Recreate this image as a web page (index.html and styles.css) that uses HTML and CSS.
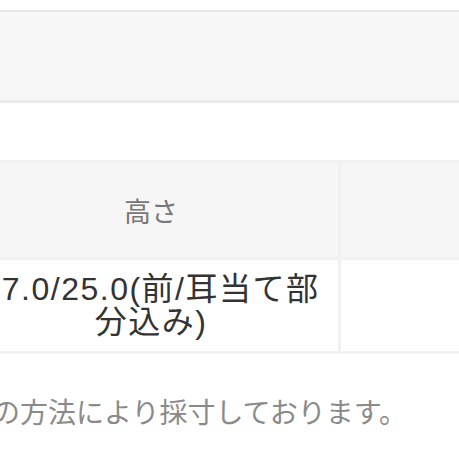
FILE: index.html
```html
<!DOCTYPE html>
<html lang="ja">
<head>
  <meta charset="UTF-8" />
  <meta name="viewport" content="width=device-width, initial-scale=1.0"/>
  <title>サイズ表</title>
  <link rel="stylesheet" href="styles.css">
</head>
<body>

  <div class="size-band"></div>

  <table class="size-table">
    <tr>
      <th class="col-main">高さ</th>
      <th class="col-side"></th>
    </tr>
    <tr>
      <td class="col-main">27.0/25.0(前/耳当て部<br>分込み)</td>
      <td class="col-side"></td>
    </tr>
  </table>

  <p class="size-note">上記の方法により採寸しております。</p>

</body>
</html>
```

FILE: styles.css
```css
* {
  box-sizing: border-box;
}

html,
body {
  overflow: hidden;
}

body {
  margin: 0;
  padding: 0;
  background-color: #fff;
  font-family: "Liberation Sans", "Noto Sans CJK JP", sans-serif;
  color: #333;
}

.size-band {
  margin-top: 10px;
  height: 93px;
  background-color: #f7f7f7;
  border-top: 2px solid #e6e6e6;
  border-bottom: 3px solid #ebebeb;
}

.size-table {
  width: 543px;
  table-layout: fixed;
  margin-top: 57px;
  margin-left: -39px;
  border-spacing: 3px;
  background-color: #f1f1f1;
}

.size-table th,
.size-table td {
  padding: 0;
  text-align: center;
  vertical-align: middle;
  white-space: nowrap;
}

.size-table th {
  height: 94px;
  background-color: #f6f6f6;
  color: #777;
  font-size: 27px;
  font-weight: normal;
}

.size-table td {
  height: 91px;
  background-color: #fff;
  font-size: 32px;
  line-height: 33px;
  letter-spacing: 1.5px;
  color: #333;
}

.col-main {
  width: 374px;
}

.col-side {
  width: 160px;
}

.size-note {
  margin: 40px 0 0 -64px;
  font-size: 28px;
  line-height: 40px;
  color: #8a8a8a;
  white-space: nowrap;
}
```
